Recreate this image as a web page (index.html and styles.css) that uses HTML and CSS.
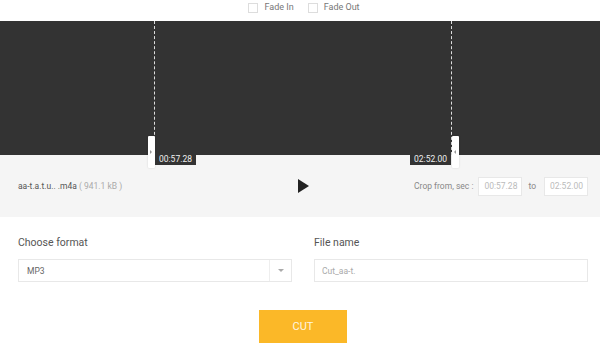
FILE: index.html
```html
<!DOCTYPE html>
<html>
<head>
<meta charset="utf-8">
<link rel="stylesheet" href="styles.css">
</head>
<body>
<div class="page">
  <div class="fades">
    <label class="fade"><span class="box"></span>Fade In</label>
    <label class="fade"><span class="box"></span>Fade Out</label>
  </div>
  <div class="wave">
    <div class="marker left" style="left:154px">
      <span class="handle"></span>
      <span class="time">00:57.28</span>
    </div>
    <div class="marker right" style="left:451px">
      <span class="handle"></span>
      <span class="time">02:52.00</span>
    </div>
  </div>
  <div class="bar">
    <div class="fname">aa-t.a.t.u.. .m4a <span class="size">( 941.1 kB )</span></div>
    <div class="play"></div>
    <div class="crop">
      <span class="crop-label">Crop from, sec :</span>
      <span class="tbox">00:57.28</span>
      <span class="to">to</span>
      <span class="tbox">02:52.00</span>
    </div>
  </div>
  <div class="form">
    <div class="field">
      <div class="flabel">Choose format</div>
      <div class="select"><span class="sv">MP3</span><span class="arrow"></span></div>
    </div>
    <div class="field">
      <div class="flabel">File name</div>
      <div class="input">Cut_aa-t.</div>
    </div>
  </div>
  <div class="actions"><button class="cut">CUT</button></div>
</div>
</body>
</html>
```
FILE: styles.css
```css
* { box-sizing: border-box; }
html, body { margin: 0; padding: 0; background: #fff; }
body { font-family: Roboto, "Liberation Sans", sans-serif; color: #555; width: 600px; height: 349px; overflow: hidden; }
.fades { height: 21px; display: flex; justify-content: center; align-items: flex-start; padding-top: 2px; gap: 14px; padding-left: 8px; font-size: 9px; color: #777; }
.fade { display: flex; align-items: center; gap: 6px; line-height: 11px; }
.box { width: 10px; height: 10px; border: 1px solid #ddd; background: #fff; display: inline-block; }
.wave { position: relative; z-index: 2; height: 134px; background: #333; }
.marker { position: absolute; top: 0; height: 134px; border-left: 1px dashed #ddd; width: 0; }
.marker .handle { position: absolute; top: 115px; width: 7px; height: 32px; background: #fff; border-radius: 1px; box-shadow: 0 0 2px rgba(0,0,0,0.15); }
.marker.left .handle { left: -7px; }
.marker.right .handle { left: 0; }
.marker .handle::after { content: ""; position: absolute; top: 14px; left: 2px; border-top: 2px solid transparent; border-bottom: 2px solid transparent; }
.marker.left .handle::after { border-left: 2px solid #999; }
.marker.right .handle::after { border-right: 2px solid #999; }
.time { position: absolute; top: 132px; background: #333; color: #eee; font-size: 8.5px; height: 12px; line-height: 12px; padding: 0 4px; white-space: nowrap; }
.marker.left .time { left: 0; }
.marker.right .time { right: 1px; }
.bar { height: 62px; background: #f5f5f5; display: flex; align-items: center; padding: 0 12px 0 18px; }
.fname { font-size: 8.5px; color: #555; width: 280px; }
.size { color: #aaa; }
.play { width: 0; height: 0; border-left: 11px solid #222; border-top: 7px solid transparent; border-bottom: 7px solid transparent; }
.crop { margin-left: auto; display: flex; align-items: center; font-size: 8.5px; color: #888; }
.crop-label { margin-right: 5px; }
.tbox { width: 44px; height: 19px; border: 1px solid #e8e8e8; background: #fff; color: #bbb; display: flex; align-items: center; padding-left: 5px; }
.to { margin: 0 8px 0 6px; }
.form { display: flex; gap: 22px; padding: 20px 12px 0 18px; }
.field { flex: 1; }
.flabel { font-size: 10.5px; color: #555; height: 22px; line-height: 12px; }
.select, .input { height: 23px; border: 1px solid #e8e8e8; background: #fff; display: flex; align-items: center; font-size: 8.5px; }
.sv { flex: 1; padding-left: 8px; color: #666; }
.arrow { width: 22px; height: 21px; border-left: 1px solid #eee; position: relative; }
.arrow::after { content: ""; position: absolute; left: 8px; top: 9px; border-top: 3px solid #aaa; border-left: 3px solid transparent; border-right: 3px solid transparent; }
.input { padding-left: 7px; color: #aaa; }
.actions { display: flex; justify-content: center; padding-top: 28px; padding-left: 6px; }
.cut { width: 88px; height: 33px; background: #fbb828; border: none; color: #fff6e0; font-family: Roboto, "Liberation Sans", sans-serif; font-size: 11px; }
```
